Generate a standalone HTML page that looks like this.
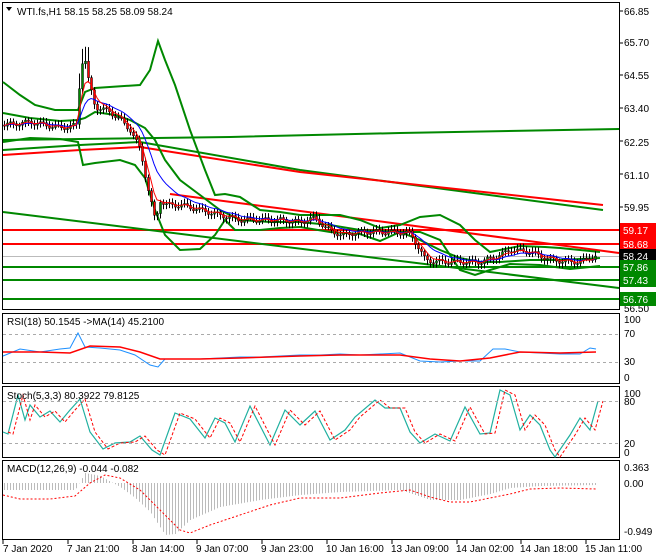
<!DOCTYPE html>
<html><head><meta charset="utf-8"><style>
html,body{margin:0;padding:0;background:#fff;width:660px;height:560px;overflow:hidden}
svg{display:block;font-family:"Liberation Sans",sans-serif}
text{font-size:10px;fill:#000}
</style></head><body>
<svg id="s" width="660" height="560" viewBox="0 0 660 560" xmlns="http://www.w3.org/2000/svg">
<rect width="660" height="560" fill="#fff"/>
<rect x="2.5" y="2.5" width="617" height="307" fill="none" stroke="#000"/>
<rect x="2.5" y="313.5" width="617" height="70" fill="none" stroke="#000"/>
<rect x="2.5" y="386.5" width="617" height="71" fill="none" stroke="#000"/>
<rect x="2.5" y="460.5" width="617" height="79" fill="none" stroke="#000"/>
<g id="main"></g>
<g>
<text x="624" y="15">66.85</text><text x="624" y="46">65.70</text><text x="624" y="79">64.55</text>
<text x="624" y="112">63.40</text><text x="624" y="146">62.25</text><text x="624" y="179">61.10</text>
<text x="624" y="211">59.95</text><text x="624" y="312">56.50</text>
</g>
<g stroke="#000"><line x1="619" y1="11" x2="623" y2="11"/><line x1="619" y1="43" x2="623" y2="43"/><line x1="619" y1="75" x2="623" y2="75"/><line x1="619" y1="108" x2="623" y2="108"/><line x1="619" y1="141" x2="623" y2="141"/><line x1="619" y1="174" x2="623" y2="174"/><line x1="619" y1="207" x2="623" y2="207"/></g>
<rect x="620" y="223" width="36" height="14" fill="#f00"/><text x="623" y="234" style="fill:#fff">59.17</text>
<rect x="620" y="237" width="36" height="14" fill="#f00"/><text x="623" y="248" style="fill:#fff">58.68</text>
<rect x="620" y="249" width="36" height="14" fill="#000"/><text x="623" y="260" style="fill:#fff">58.24</text>
<rect x="620" y="260" width="36" height="14" fill="#080"/><text x="623" y="271" style="fill:#fff">57.86</text>
<rect x="620" y="273" width="36" height="14" fill="#080"/><text x="623" y="284" style="fill:#fff">57.43</text>
<rect x="620" y="292" width="36" height="14" fill="#080"/><text x="623" y="303" style="fill:#fff">56.76</text>
<text x="17" y="15">WTI.fs,H1  58.15 58.25 58.09 58.24</text>
<path d="M6 7 L12 7 L9 11 Z" fill="#000"/>
<text x="7" y="325">RSI(18) 50.1545  -&gt;MA(14) 45.2100</text>
<text x="624" y="323">100</text><text x="624" y="337">70</text><text x="624" y="365">30</text><text x="624" y="381">0</text>
<line x1="3" y1="334.5" x2="619" y2="334.5" stroke="#aaa" stroke-dasharray="3,3"/>
<line x1="3" y1="362.5" x2="619" y2="362.5" stroke="#aaa" stroke-dasharray="3,3"/>
<g id="ind"></g>
<text x="7" y="399">Stoch(5,3,3) 80.3922 79.8125</text>
<text x="624" y="397">100</text><text x="624" y="405">80</text><text x="624" y="447">20</text><text x="624" y="456">0</text>
<line x1="3" y1="401.5" x2="619" y2="401.5" stroke="#aaa" stroke-dasharray="3,3"/>
<line x1="3" y1="443.5" x2="619" y2="443.5" stroke="#aaa" stroke-dasharray="3,3"/>
<text x="7" y="472">MACD(12,26,9) -0.044 -0.082</text>
<text x="624" y="471">0.363</text><text x="624" y="487">0.00</text><text x="624" y="535">-0.949</text>
<g>
<text x="3" y="552">7 Jan 2020</text><text x="67" y="552">7 Jan 21:00</text><text x="132" y="552">8 Jan 14:00</text>
<text x="196" y="552">9 Jan 07:00</text><text x="261" y="552">9 Jan 23:00</text><text x="326" y="552">10 Jan 16:00</text>
<text x="391" y="552">13 Jan 09:00</text><text x="456" y="552">14 Jan 02:00</text><text x="520" y="552">14 Jan 18:00</text>
<text x="585" y="552">15 Jan 11:00</text>
</g>
</svg>
<script>
(function(){
var NS="http://www.w3.org/2000/svg";
function el(p,t,a){var e=document.createElementNS(NS,t);for(var k in a)e.setAttribute(k,a[k]);p.appendChild(e);return e;}
function pl(p,pts,c,w,d){var a={points:pts.map(function(q){return q.join(",")}).join(" "),fill:"none",stroke:c,"stroke-width":w||1};if(d)a["stroke-dasharray"]=d;el(p,"polyline",a);}
function interp(pts,x){for(var i=0;i<pts.length-1;i++){if(x>=pts[i][0]&&x<=pts[i+1][0]){var t=(x-pts[i][0])/(pts[i+1][0]-pts[i][0]);return pts[i][1]+t*(pts[i+1][1]-pts[i][1]);}}return pts[pts.length-1][1];}
var m=document.getElementById("main");
[3,68,133,197,262,327,392,457,521,586].forEach(function(x){el(m,"line",{x1:x,y1:540,x2:x,y2:544,stroke:"#000"});});
el(m,"line",{x1:3,y1:256.5,x2:619,y2:256.5,stroke:"#bbb"});
pl(m,[[3,230],[619,230]],"#f00",2);
pl(m,[[3,244],[619,244]],"#f00",2);
pl(m,[[3,267],[619,267]],"#080",2);
pl(m,[[3,280],[619,280]],"#080",2);
pl(m,[[3,299],[619,299]],"#080",2);
pl(m,[[3,140],[230,137],[400,133],[619,129]],"#080",2);
pl(m,[[3,150],[80,145],[140,142],[300,170],[603,210]],"#080",2);
pl(m,[[3,155],[80,150],[140,147],[300,172],[603,205]],"#f00",2);
pl(m,[[170,194],[400,224],[619,253]],"#f00",2);
pl(m,[[3,212],[619,288]],"#080",2);
var up=[[3,82],[20,95],[35,105],[55,110],[78,110],[85,92],[95,88],[140,85],[150,70],[158,41],[165,60],[175,85],[190,130],[205,170],[215,195],[225,194],[240,197],[260,210],[280,212],[300,215],[320,215],[340,215],[360,220],[380,228],[400,225],[420,217],[440,215],[460,225],[475,240],[490,252],[500,250],[520,246],[545,247],[560,248],[600,252]];
var md=[[3,113],[30,118],[60,121],[78,120],[85,118],[95,112],[115,115],[130,120],[145,128],[155,140],[165,160],[180,180],[200,195],[220,210],[240,220],[270,222],[300,222],[330,225],[360,230],[400,232],[420,240],[440,250],[460,258],[480,262],[500,262],[530,260],[560,260],[600,258]];
var lo=[[3,142],[30,138],[60,139],[78,142],[83,165],[95,163],[120,160],[135,165],[145,178],[155,210],[165,235],[180,250],[200,249],[215,235],[225,220],[235,230],[260,230],[280,228],[300,227],[330,232],[360,234],[380,241],[400,232],[420,232],[440,240],[460,270],[475,275],[490,270],[510,264],[540,265],[570,269],[600,266]];
pl(m,up,"#080",2);pl(m,md,"#080",2);pl(m,lo,"#080",2);
var pr=[[3,125],[30,122],[60,128],[77,125],[80,68],[84,55],[88,80],[95,107],[110,112],[120,120],[130,130],[140,150],[148,190],[155,222],[160,200],[165,205],[180,205],[200,210],[220,215],[240,220],[260,220],[280,220],[300,222],[315,218],[325,228],[340,235],[360,232],[380,232],[410,233],[425,260],[440,262],[460,262],[480,262],[500,255],[510,250],[530,252],[545,258],[560,261],[580,262],[590,258],[596,256]];
var prev=interp(pr,3);
var blue=[],red=[],eb=prev,er=prev;
for(var x=4;x<=596;x+=3){var c=interp(pr,x)+Math.sin(x*1.7)*2.5;var o=prev;var hi=Math.min(o,c)-2-Math.abs(Math.sin(x))*3,lw=Math.max(o,c)+2+Math.abs(Math.cos(x))*3;
if(x>=78&&x<=90){hi-=12;}
el(m,"line",{x1:x+.5,y1:hi,x2:x+.5,y2:lw,stroke:"#000"});
var bt=Math.min(o,c),h=Math.max(1,Math.abs(o-c));
el(m,"rect",{x:x-.5,y:bt,width:2,height:h,fill:c<o?"#080":"#f00",stroke:"#000","stroke-width":.5});
prev=c;er+=(c-er)*0.35;eb+=(c-eb)*0.15;red.push([x,er]);blue.push([x,eb]);}
pl(m,blue,"#00f",1);pl(m,red,"#f00",1);
var g=document.getElementById("ind");
var rsi=[[3,356],[20,349],[40,352],[60,349],[70,348],[78,333],[85,347],[100,348],[120,350],[135,355],[150,365],[158,367],[165,359],[180,359],[200,359],[220,358],[240,357],[260,357],[280,356],[300,355],[320,355],[340,354],[360,355],[380,354],[400,353],[420,361],[440,362],[460,361],[480,361],[493,349],[505,349],[520,352],[540,353],[560,354],[580,354],[590,348],[596,349]];
var rma=[[3,352],[40,352],[70,353],[90,346],[120,347],[140,352],[160,359],[200,359],[240,358],[300,356],[340,355],[400,355],[430,359],[460,361],[490,358],[520,352],[560,353],[596,352]];
pl(g,rsi,"#1e90ff",1);pl(g,rma,"#f00",1.5);
var st=[[3,432],[8,434],[18,395],[25,420],[30,405],[40,417],[50,411],[60,422],[70,410],[80,399],[90,432],[103,449],[115,443],[130,442],[140,436],[152,450],[160,455],[175,413],[190,419],[205,438],[215,418],[225,423],[235,442],[250,406],[270,445],[285,410],[300,425],[315,411],[330,440],[345,430],[355,417],[375,400],[385,408],[400,408],[410,432],[420,443],[435,434],[450,441],[465,407],[480,434],[490,433],[500,390],[510,395],[520,430],[530,415],[540,425],[550,450],[555,457],[570,435],[580,418],[590,430],[598,401]];
pl(g,st,"#20b0a0",1.2);
var sd=st.map(function(p){return[p[0]+5,p[1]]});pl(g,sd,"#f00",1,"3,2");
var mh=[[3,490],[60,490],[75,490],[85,473],[100,476],[120,487],[135,498],[150,512],[165,535],[175,534],[190,520],[220,507],[260,500],[300,495],[340,492],[400,490],[430,500],[460,500],[490,494],[510,488],[540,486],[596,485]];
for(var x2=4;x2<=596;x2+=3){var y=interp(mh,x2);el(g,"line",{x1:x2+.5,y1:483,x2:x2+.5,y2:y,stroke:"#bbb"});}
var ms=[[3,495],[20,499],[50,499],[75,496],[90,483],[105,475],[120,478],[140,490],[160,510],[180,530],[190,533],[210,525],[240,515],[270,505],[300,498],[340,498],[380,493],[410,490],[430,497],[450,502],[470,502],[490,498],[510,494],[530,489],[560,488],[596,489]];
pl(g,ms,"#f00",1,"2,2");
})();
</script>
</body></html>
